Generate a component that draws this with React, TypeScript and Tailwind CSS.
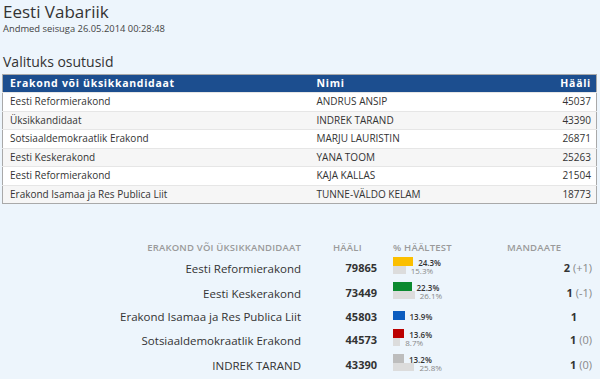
import React from "react";

type Elected = { party: string; name: string; votes: number };

const elected: Elected[] = [
  { party: "Eesti Reformierakond", name: "ANDRUS ANSIP", votes: 45037 },
  { party: "Üksikkandidaat", name: "INDREK TARAND", votes: 43390 },
  { party: "Sotsiaaldemokraatlik Erakond", name: "MARJU LAURISTIN", votes: 26871 },
  { party: "Eesti Keskerakond", name: "YANA TOOM", votes: 25263 },
  { party: "Eesti Reformierakond", name: "KAJA KALLAS", votes: 21504 },
  { party: "Erakond Isamaa ja Res Publica Liit", name: "TUNNE-VÄLDO KELAM", votes: 18773 },
];

type Result = {
  party: string;
  votes: number;
  pct: number;
  prev?: number;
  color: string;
  seats: number;
  change?: string;
};

const results: Result[] = [
  { party: "Eesti Reformierakond", votes: 79865, pct: 24.3, prev: 15.3, color: "#fbbf00", seats: 2, change: "(+1)" },
  { party: "Eesti Keskerakond", votes: 73449, pct: 22.3, prev: 26.1, color: "#0b8a30", seats: 1, change: "(-1)" },
  { party: "Erakond Isamaa ja Res Publica Liit", votes: 45803, pct: 13.9, color: "#0b5cbf", seats: 1 },
  { party: "Sotsiaaldemokraatlik Erakond", votes: 44573, pct: 13.6, prev: 8.7, color: "#bb0000", seats: 1, change: "(0)" },
  { party: "INDREK TARAND", votes: 43390, pct: 13.2, prev: 25.8, color: "#bdbdbd", seats: 1, change: "(0)" },
];

const scale = 0.83;

const App = () => {
  return (
    <div className="w-[600px] h-[379px] overflow-hidden bg-[#edf5fc] text-[#333] font-['Open_Sans',sans-serif]">
      <div className="px-[3px] pt-[1px]">
        <h1 className="text-[17px] leading-[22px]">Eesti Vabariik</h1>
        <p className="text-[9.4px] leading-[12px] text-[#444]">Andmed seisuga 26.05.2014 00:28:48</p>
        <h2 className="text-[14px] leading-[18px] mt-[18px]">Valituks osutusid</h2>
      </div>

      <table className="mx-[2px] mt-[3px] w-[595px] table-fixed border border-[#a9a9a9] border-collapse text-[10px]">
        <colgroup>
          <col className="w-[314px]" />
          <col className="w-[200px]" />
          <col />
        </colgroup>
        <thead>
          <tr className="bg-[#1c4e8f] text-white h-[18px] text-[10.5px] tracking-[0.7px]">
            <th className="text-left font-bold pl-[7px]">Erakond või üksikkandidaat</th>
            <th className="text-left font-bold">Nimi</th>
            <th className="text-right font-bold pr-[5px]">Hääli</th>
          </tr>
        </thead>
        <tbody>
          {elected.map((row, i) => (
            <tr key={i} className={`h-[18.5px] border-t border-[#e6e6e6] ${i % 2 === 1 ? "bg-[#f6f6f6]" : "bg-white"}`}>
              <td className="pl-[7px]">{row.party}</td>
              <td>{row.name}</td>
              <td className="text-right pr-[5px]">{row.votes}</td>
            </tr>
          ))}
        </tbody>
      </table>

      <div className="mt-[37px]">
        <div className="flex items-center h-[14px] text-[9.5px] font-semibold tracking-[0.2px] text-[#9a9a9a]">
          <div className="w-[301px] text-right">ERAKOND VÕI ÜKSIKKANDIDAAT</div>
          <div className="w-[76px] pl-[32px]">HÄÄLI</div>
          <div className="w-[130px] pl-[16px]">% HÄÄLTEST</div>
          <div className="w-[85px]">MANDAATE</div>
        </div>

        {results.map((r, i) => (
          <div key={i} className={`flex items-center text-[11.5px] ${r.prev ? "h-[25px]" : "h-[22px]"}`}>
            <div className="w-[301px] text-right pt-[2px]">{r.party}</div>
            <div className="w-[76px] text-right font-bold text-[11px] pt-[2px]">{r.votes}</div>
            <div className={`w-[130px] pl-[16px] flex flex-col justify-center ${r.prev ? "mb-[5px]" : "mb-[2px]"}`}>
              <div className="flex items-center h-[9px]">
                <div className="h-[9px]" style={{ width: r.pct * scale, backgroundColor: r.color }} />
                <span className="ml-[5px] text-[8px] font-semibold leading-[9px] pt-[2px]">{r.pct}%</span>
              </div>
              {r.prev && (
                <div className="flex items-center h-[8px]">
                  <div className="h-[8px] bg-[#dcdcdc]" style={{ width: r.prev * scale }} />
                  <span className="ml-[5px] text-[8px] leading-[8px] pt-[3px] text-[#888]">{r.prev}%</span>
                </div>
              )}
            </div>
            <div className={`w-[85px] text-right text-[11px] pt-[2px] ${r.change ? "" : "pr-[15px]"}`}>
              <span className="font-bold">{r.seats}</span>
              {r.change && <span className="text-[#888]"> {r.change}</span>}
            </div>
          </div>
        ))}
      </div>
    </div>
  );
};

export default App;
